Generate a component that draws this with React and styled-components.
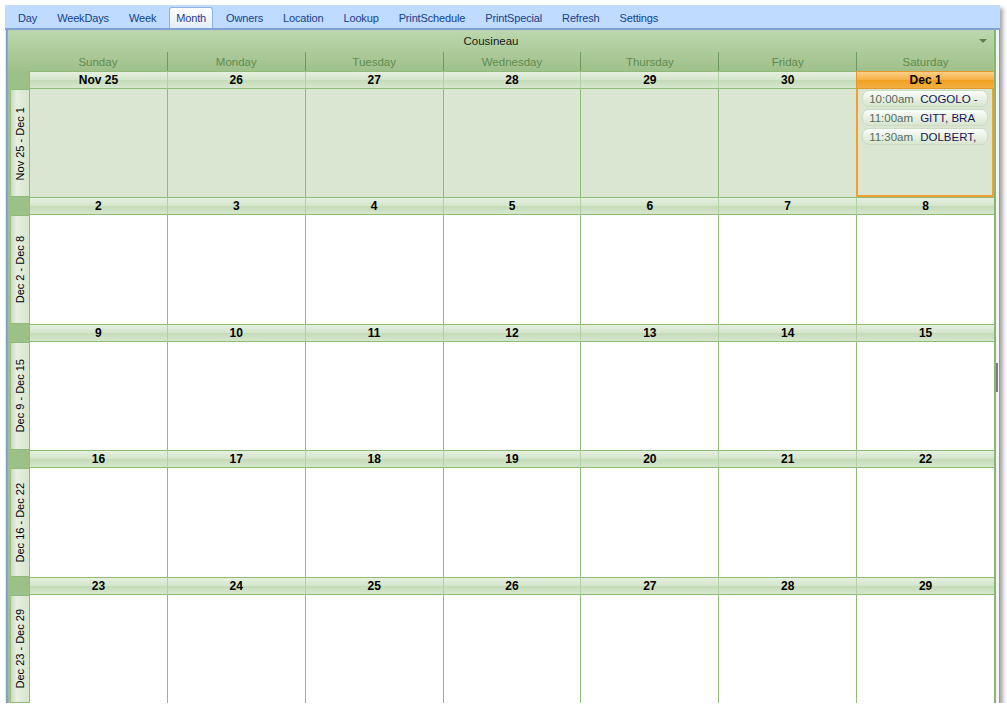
import React from "react"
import styled, { createGlobalStyle } from 'styled-components'

const Global = createGlobalStyle`
    html, body {
        margin: 0;
        background: #ffffff;
        font-family: "Liberation Sans", Arial, sans-serif;
    }
`

const Window = styled.div`
    margin: 5px 0 0 5px;
    width: 995px;
    height: 698px;
    display: flex;
    flex-direction: column;
    box-shadow: 3px 3px 4px rgba(0,0,0,0.35);
    background: #bfdbff;
`

const TabBar = styled.div`
    height: 23px;
    display: flex;
    align-items: flex-end;
    padding-left: 3px;
    background: #bfdbff;
    border-bottom: 2px solid #7fa1d6;
`

const Tab = styled.div`
    height: 20px;
    line-height: 20px;
    margin: 0 3px;
    padding: 0 6px;
    font-size: 11px;
    letter-spacing: -0.15px;
    color: ${p => p.active ? '#2a3a8c' : '#15428b'};
    border: 1px solid ${p => p.active ? '#8db2e3' : 'transparent'};
    border-bottom: none;
    border-radius: 3px 3px 0 0;
    background: ${p => p.active ? 'linear-gradient(#ffffff, #e3edfb)' : 'transparent'};
    cursor: default;
`

const Body = styled.div`
    flex: 1;
    display: flex;
    border-left: 1px solid #dce8f8;
    min-height: 0;
`

const LeftEdge = styled.div`
    width: 2px;
    background: #7fa1d6;
`

const Calendar = styled.div`
    flex: 1;
    display: flex;
    flex-direction: column;
    background: #9dbf88;
    border-right: 2px solid #87b670;
    min-width: 0;
`

const RightEdge = styled.div`
    position: relative;
    width: 3px;
    background: #f4f4f4;
    border-right: 1px solid #9a9a9a;
`

const Thumb = styled.div`
    position: absolute;
    left: 0;
    top: 333px;
    width: 2px;
    height: 29px;
    background: #7a7a88;
`

const Top = styled.div`
    background: linear-gradient(#bcd7ae, #9fc08a);
`

const Title = styled.div`
    position: relative;
    height: 22px;
    line-height: 22px;
    text-align: center;
    padding-right: 20px;
    font-size: 11.5px;
    color: #1a1a1a;
`

const Arrow = styled.div`
    position: absolute;
    right: 7px;
    top: 9px;
    width: 0;
    height: 0;
    border-left: 4px solid transparent;
    border-right: 4px solid transparent;
    border-top: 4px solid #5c7f4c;
`

const Row = styled.div`
    display: grid;
    grid-template-columns: 21px repeat(7, 1fr);
`

const DayName = styled.div`
    height: 19px;
    line-height: 20px;
    text-align: center;
    font-size: 11.5px;
    color: #5f8c4e;
    border-left: ${p => p.first ? 'none' : '1px solid #6f9a5d'};
`

const Weeks = styled.div`
    flex: 1;
    display: flex;
    flex-direction: column;
`

const Week = styled.div`
    flex: 1;
    display: flex;
    flex-direction: column;
`

const HeadRow = styled(Row)`
    height: 18px;
`

const DayHead = styled.div`
    height: 16px;
    line-height: 17px;
    text-align: center;
    font-size: 12px;
    font-weight: bold;
    color: #000;
    border-top: 1px solid ${p => p.today ? '#e39a2c' : '#8fba78'};
    border-bottom: 1px solid ${p => p.today ? '#e39a2c' : '#8fba78'};
    border-left: 1px solid ${p => p.today ? '#e39a2c' : p.first ? '#8fba78' : '#b3cfa5'};
    background: ${p => p.today
        ? 'linear-gradient(#fbcf88, #f6b044 50%, #f0a020 51%, #f3ae40)'
        : 'linear-gradient(#e6f0e0, #d3e5ca 50%, #c4dbb8 52%, #d6e7cd)'};
`

const CellRow = styled(Row)`
    flex: 1;
    min-height: 0;
`

const WeekLabel = styled.div`
    margin-left: 3px;
    display: flex;
    align-items: center;
    justify-content: center;
    background: linear-gradient(90deg, #c9d8c1, #e6efe0 30%, #d6e5cd);
    border-top: 1px solid #8fba78;
    border-bottom: 1px solid #8fba78;
    overflow: hidden;
`

const LabelText = styled.span`
    writing-mode: vertical-rl;
    transform: rotate(180deg);
    white-space: nowrap;
    font-size: 11px;
    color: #000;
`

const Cell = styled.div`
    background: ${p => p.muted ? '#dae6d2' : '#ffffff'};
    border-left: 1px solid #8fba78;
    ${p => p.today && `
        border: 2px solid #f0a030;
        border-top: none;
    `}
    padding: ${p => p.today ? '1px 4px 0 4px' : '0'};
    display: flex;
    flex-direction: column;
    gap: 2px;
    min-width: 0;
    overflow: hidden;
`

const Appt = styled.div`
    box-sizing: border-box;
    height: 17px;
    flex: none;
    display: flex;
    align-items: center;
    padding: 0 6px;
    border-radius: 7px;
    border: 1px solid #cbdcc2;
    background: linear-gradient(#fbfdfa, #e7f0e1 55%, #d8e6d0);
    font-size: 11.5px;
    white-space: nowrap;
    overflow: hidden;
`

const ApptTime = styled.span`
    color: #566c60;
    width: 51px;
    flex: none;
`

const ApptName = styled.span`
    color: #14185a;
`

const tabs = ['Day', 'WeekDays', 'Week', 'Month', 'Owners', 'Location', 'Lookup', 'PrintSchedule', 'PrintSpecial', 'Refresh', 'Settings']
const dayNames = ['Sunday', 'Monday', 'Tuesday', 'Wednesday', 'Thursday', 'Friday', 'Saturday']

const weeks = [
    { label: 'Nov 25 - Dec 1', days: ['Nov 25', '26', '27', '28', '29', '30', 'Dec 1'], muted: true },
    { label: 'Dec 2 - Dec 8', days: ['2', '3', '4', '5', '6', '7', '8'] },
    { label: 'Dec 9 - Dec 15', days: ['9', '10', '11', '12', '13', '14', '15'] },
    { label: 'Dec 16 - Dec 22', days: ['16', '17', '18', '19', '20', '21', '22'] },
    { label: 'Dec 23 - Dec 29', days: ['23', '24', '25', '26', '27', '28', '29'] },
]

const appointments = [
    { time: '10:00am', name: 'COGOLO -' },
    { time: '11:00am', name: 'GITT, BRA' },
    { time: '11:30am', name: 'DOLBERT,' },
]

const App = () => {
    return (
        <>
            <Global />
            <Window>
                <TabBar>
                    {tabs.map(t => <Tab key={t} active={t === 'Month'}>{t}</Tab>)}
                </TabBar>
                <Body>
                    <LeftEdge />
                    <Calendar>
                        <Top>
                            <Title>Cousineau<Arrow /></Title>
                            <Row>
                                <div />
                                {dayNames.map((d, i) => <DayName key={d} first={i === 0}>{d}</DayName>)}
                            </Row>
                        </Top>
                        <Weeks>
                            {weeks.map((w, wi) => (
                                <Week key={w.label}>
                                    <HeadRow>
                                        <div />
                                        {w.days.map((d, i) => (
                                            <DayHead key={i} first={i === 0} today={wi === 0 && i === 6}>{d}</DayHead>
                                        ))}
                                    </HeadRow>
                                    <CellRow>
                                        <WeekLabel><LabelText>{w.label}</LabelText></WeekLabel>
                                        {w.days.map((d, i) => {
                                            const today = wi === 0 && i === 6
                                            return (
                                                <Cell key={i} muted={w.muted} today={today}>
                                                    {today && appointments.map(a => (
                                                        <Appt key={a.time}>
                                                            <ApptTime>{a.time}</ApptTime>
                                                            <ApptName>{a.name}</ApptName>
                                                        </Appt>
                                                    ))}
                                                </Cell>
                                            )
                                        })}
                                    </CellRow>
                                </Week>
                            ))}
                        </Weeks>
                    </Calendar>
                    <RightEdge><Thumb /></RightEdge>
                </Body>
            </Window>
        </>
    )
}

export default App
